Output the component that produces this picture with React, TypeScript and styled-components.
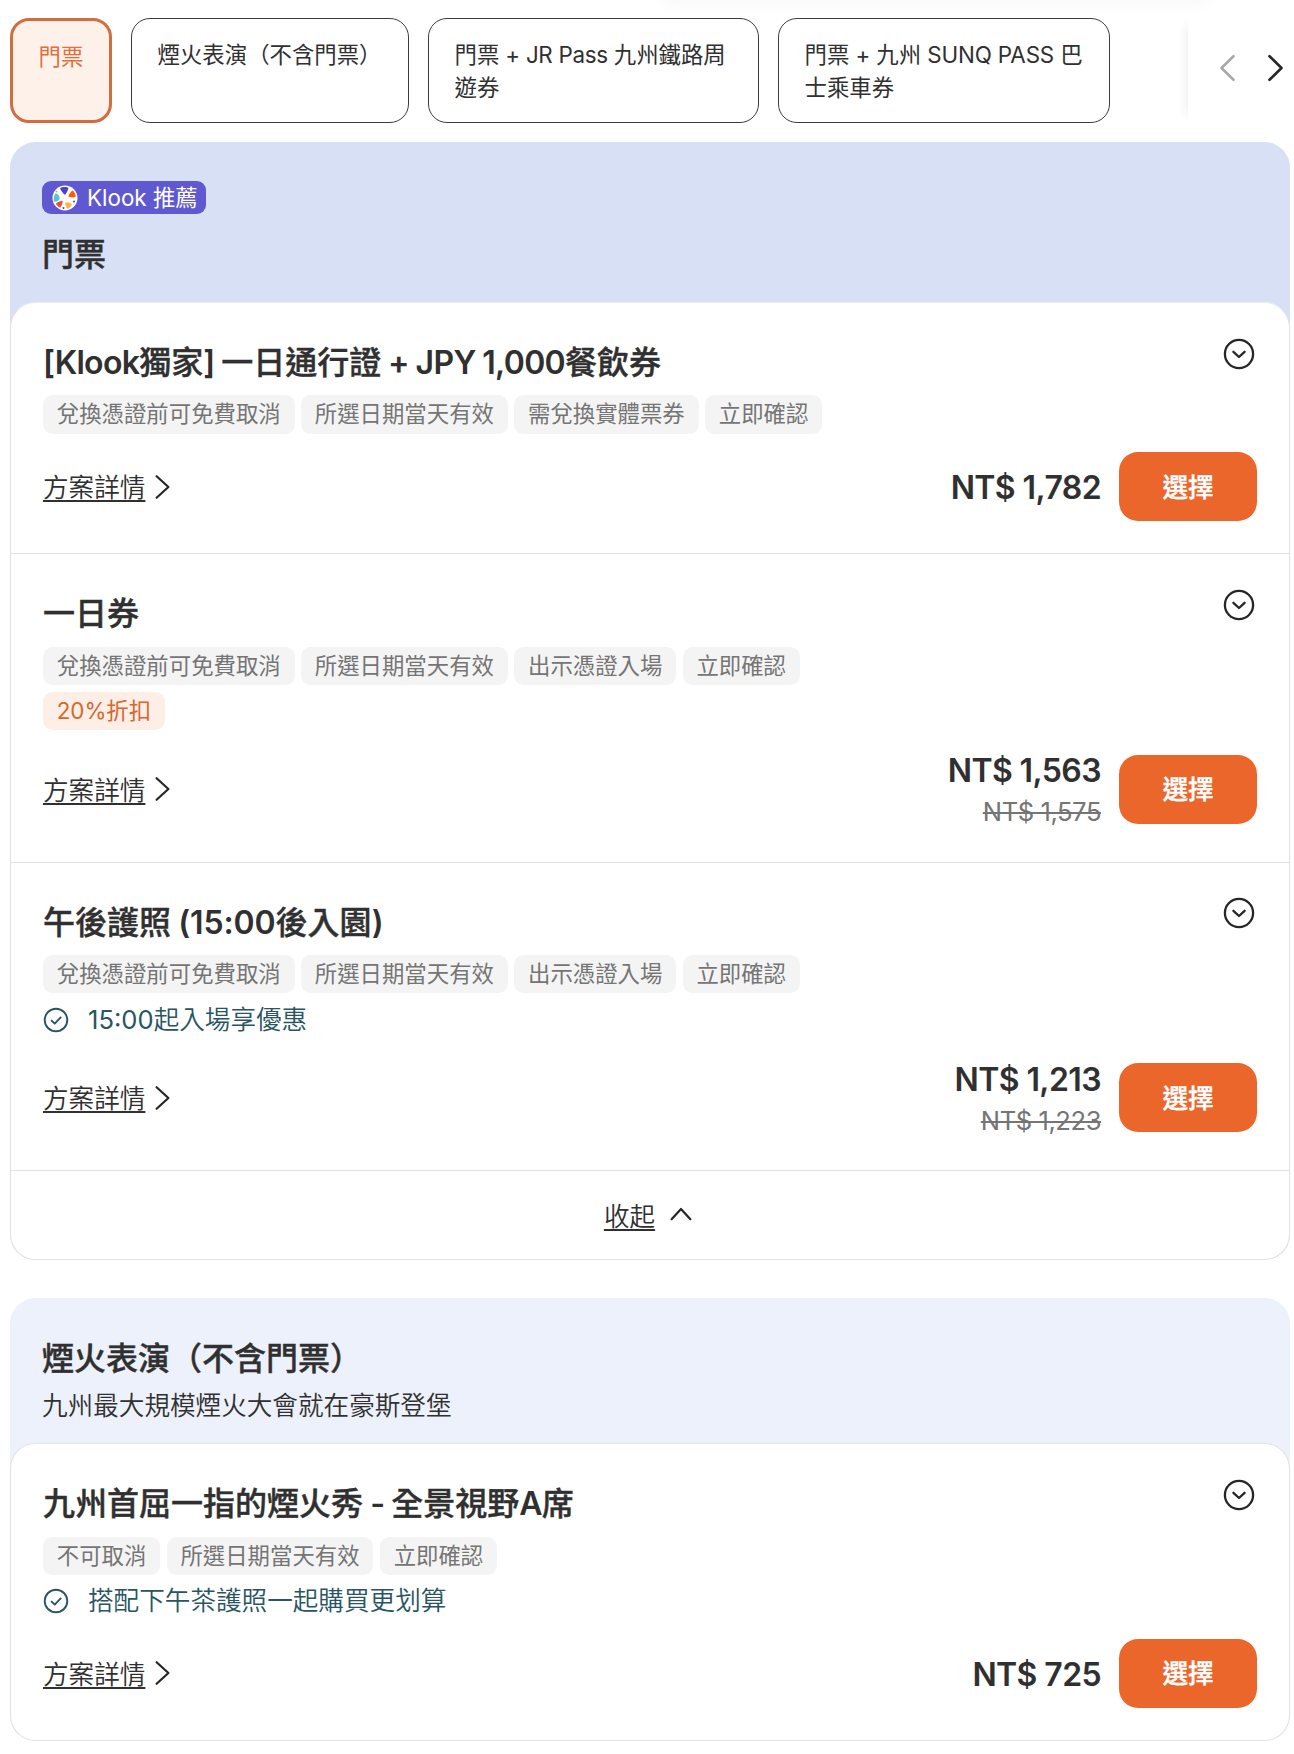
import React from 'react';
import styled, { createGlobalStyle, css } from 'styled-components';

const GlobalStyle = createGlobalStyle`
  *, *::before, *::after { box-sizing: border-box; }
  body {
    margin: 0;
    background: #fff;
    color: #303030;
    font-family: Inter, 'Noto Sans CJK TC', sans-serif;
    font-size: 25.6px;
  }
  button { font: inherit; border: 0; background: none; padding: 0; margin: 0; color: inherit; cursor: pointer; }
  svg { display: block; flex: none; }
`;

const Page = styled.main`
  position: relative;
  width: 1294px;
  height: 1754px;
  padding: 18px 4px 0 10px;
  overflow: hidden;
  background: #fff;
`;

const TopShade = styled.div`
  position: absolute;
  top: -20px;
  left: 660px;
  width: 550px;
  height: 18px;
  box-shadow: 0 4px 18px rgba(0, 0, 0, 0.035);
`;

const TabBar = styled.nav`
  display: flex;
  height: 105px;
`;

const TabList = styled.div`
  display: flex;
  flex: 1;
  gap: 19px;
`;

const Tab = styled.button<{ $width: number; $active?: boolean }>`
  display: flex;
  flex-direction: column;
  align-items: flex-start;
  justify-content: flex-start;
  flex: none;
  width: ${(p) => p.$width}px;
  height: 105px;
  padding: 19px 25.6px;
  border: 1px solid #3c3c3c;
  border-radius: 19px;
  background: #fff;
  color: #303030;
  font-size: 22.4px;
  text-align: left;
  ${(p) =>
    p.$active &&
    css`
      border: 3px solid #d26c41;
      background: #fdf1e9;
      color: #de6f3f;
    `}
`;

const TabLine = styled.span`
  display: block;
  height: 33px;
  line-height: 33px;
  white-space: pre;
`;

const TabNav = styled.div`
  display: flex;
  align-items: center;
  gap: 31px;
  width: 102px;
  padding: 0 2px 5px 30px;
  background: #fff;
  box-shadow: -10px 0 10px -8px rgba(0, 0, 0, 0.07);
`;

const Section = styled.section<{ $tint: string; $top: number }>`
  width: 1280px;
  margin-top: ${(p) => p.$top}px;
  border-radius: 25.6px;
  background: ${(p) => p.$tint};
`;

const SectionHead = styled.header<{ $height: number; $top: number }>`
  display: flex;
  flex-direction: column;
  align-items: flex-start;
  height: ${(p) => p.$height}px;
  padding: ${(p) => p.$top}px 32px 0;
`;

const Badge = styled.span`
  display: inline-flex;
  align-items: center;
  gap: 9px;
  width: 164px;
  height: 33px;
  margin-bottom: 17px;
  padding-left: 10px;
  border-radius: 9px;
  background: #5f58d0;
  color: #fff;
  font-size: 22.4px;
  line-height: 33px;
  white-space: nowrap;
`;

const SectionTitle = styled.h2`
  margin: 0;
  font-size: 32px;
  line-height: 48px;
  font-weight: 500;
  -webkit-text-stroke: 0.4px currentColor;
`;

const SectionNote = styled.p`
  margin: 4px 0 0;
  font-weight: 350;
  line-height: 38px;
`;

const Panel = styled.div<{ $edge: string }>`
  border: 1px solid #e2e2e2;
  border-top-color: ${(p) => p.$edge};
  border-radius: 25.6px;
  background: #fff;
`;

const Item = styled.article`
  padding: 32px 32px;
  & + & { border-top: 1px solid #e2e2e2; }
`;

const ItemHead = styled.div`
  display: flex;
  justify-content: space-between;
  height: 60.4px;
`;

const ItemTitle = styled.h3`
  margin: 0;
  padding-top: 3.8px;
  font-size: 32px;
  line-height: 48px;
  font-weight: 500;
  -webkit-text-stroke: 0.4px currentColor;
  white-space: nowrap;
`;

const LatinRun = styled.span<{ $tracking: number; $word: number; $weight?: number }>`
  letter-spacing: ${(p) => p.$tracking}px;
  word-spacing: ${(p) => p.$word}px;
  font-weight: ${(p) => p.$weight ?? 'inherit'};
  -webkit-text-stroke: 0;
`;

const ExpandButton = styled.button`
  align-self: flex-start;
  margin: 2.600px 2px 0 0;
`;

const Chips = styled.div`
  display: flex;
  gap: 6.5px;
  & + & { margin-top: 7.2px; }
`;

const Chip = styled.span<{ $sale?: boolean }>`
  height: 38.2px;
  padding: 0 13.8px;
  border-radius: 9.6px;
  background: ${(p) => (p.$sale ? '#fdefe5' : '#f4f4f4')};
  color: ${(p) => (p.$sale ? '#d9662f' : '#757575')};
  font-size: 22.4px;
  line-height: 38px;
  white-space: nowrap;
`;

const Perk = styled.div`
  display: flex;
  align-items: center;
  gap: 19px;
  height: 38.2px;
  margin-top: 7.2px;
  color: #295563;
  font-weight: 350;
  line-height: 38px;
`;

const ItemFoot = styled.div<{ $tall?: boolean }>`
  display: flex;
  align-items: center;
  height: ${(p) => (p.$tall ? 81 : 69)}px;
  margin-top: 18.6px;
`;

const TextLink = styled.button<{ $gap?: number }>`
  display: inline-flex;
  align-items: center;
  gap: ${(p) => p.$gap ?? 10}px;
  font-weight: 350;
  line-height: 38px;
`;

const LinkLabel = styled.span`
  padding-top: 3px;
  text-decoration: underline;
  text-decoration-thickness: 2px;
  text-underline-offset: 3px;
  text-decoration-skip-ink: none;
`;

const Prices = styled.div`
  display: flex;
  flex-direction: column;
  align-items: flex-end;
  margin-left: auto;
  padding-top: 3px;
`;

const Price = styled.strong`
  font-size: 32px;
  line-height: 42px;
  font-weight: 600;
  letter-spacing: -0.6px;
  white-space: nowrap;
`;

const OldPrice = styled.s`
  color: #757575;
  font-size: 25.6px;
  line-height: 39px;
  font-weight: 400;
  letter-spacing: -0.45px;
  text-decoration-thickness: 2px;
  white-space: nowrap;
`;

const SelectButton = styled.button`
  width: 138px;
  height: 69px;
  margin-left: 18px;
  padding-bottom: 3px;
  border-radius: 19.2px;
  background: #eb662b;
  color: #fff;
  font-weight: 500;
  -webkit-text-stroke: 0.4px currentColor;
`;

const PanelFoot = styled.footer`
  display: flex;
  align-items: center;
  justify-content: center;
  height: 89px;
  padding-right: 4px;
  border-top: 1px solid #e2e2e2;
`;

const Stroke = { fill: 'none', strokeLinecap: 'round', strokeLinejoin: 'round' } as const;

const SideArrow = ({ left }: { left?: boolean }) => (
  <svg width="18" height="30" viewBox="0 0 18 30" {...Stroke} stroke={left ? '#a8a8a8' : '#262626'} strokeWidth="2.6">
    <path d={left ? 'M15.5 3.2 3.5 15l12 11.8' : 'M2.5 3.2 14.5 15l-12 11.8'} />
  </svg>
);

const LinkArrow = () => (
  <svg width="16" height="26" viewBox="0 0 16 26" {...Stroke} stroke="#262626" strokeWidth="2.2">
    <path d="M1.6 2.200 13.400 13 1.600 23.800" />
  </svg>
);

const UpArrow = () => (
  <svg width="22" height="16" viewBox="0 0 22 16" {...Stroke} stroke="#262626" strokeWidth="2.2">
    <path d="M1.6 12.200 11 2l9.400 10.200" />
  </svg>
);

const ExpandIcon = () => (
  <svg width="32" height="32" viewBox="0 0 32 32" {...Stroke} stroke="#262626" strokeWidth="2.3">
    <circle cx="16" cy="16" r="14.1" />
    <path d="m10.400 13.800 5.600 5.200 5.600-5.200" />
  </svg>
);

const CheckIcon = () => (
  <svg width="26" height="26" viewBox="0 0 26 26" {...Stroke} stroke="#295563" strokeWidth="1.9">
    <circle cx="13" cy="13" r="11.3" />
    <path d="m8.600 13.600 3.100 3 6-6.200" />
  </svg>
);

const KlookMark = () => (
  <svg width="26" height="26" viewBox="0 0 26 26">
    <circle cx="13" cy="13" r="12.5" fill="#fff" />
    <path d="M8 3.200C9.400 2 14.600 1.600 16.400 2.800 16.200 5 14.600 8 13 10 11.600 8.600 8.600 5.400 8 3.200Z" fill="#4d40ca" />
    <path d="M16.200 11.300c1-2.600 2.600-4.800 4.300-5.900 2 1.500 3.200 4 3.200 6.400-2.400 1-5.600.8-7.500-.5Z" fill="#ff5b00" />
    <path d="M3.600 8.300c2.600.8 4.200 2.900 4 5.100-.2 1.800-1.800 3-5.400 3.400-.9-2.800-.3-6.300 1.400-8.500Z" fill="#4fc7d4" />
    <path d="M10.600 15.800c.2 2.200-.8 5-2.500 6.900-1.700-.7-3.300-2.200-4.200-3.900 1.700-1.700 4.300-2.800 6.700-3Z" fill="#f04b35" />
    <path d="M13.300 17.800c2.300-.7 4.700-.3 6.600 1.400-.5 2-2.300 3.800-4.300 4.500-1.600-1.500-2.400-3.700-2.300-5.900Z" fill="#f6b73c" />
    <circle cx="22" cy="16.600" r="1" fill="#4d40ca" />
    <circle cx="11.500" cy="23" r="1" fill="#4d40ca" />
    <circle cx="4.500" cy="6.600" r=".9" fill="#ff9d00" />
  </svg>
);

interface MixedProps {
  text: string;
  tracking?: number;
  word?: number;
  weight?: number;
}

// Sets the Latin runs of a Chinese line with their own tracking and weight.
const Mixed = ({ text, tracking = 0, word = 0, weight }: MixedProps) => (
  <>
    {text.split(/([\x20-\x7e]+)/).map((run, i) =>
      i % 2 ? (
        <LatinRun key={i} $tracking={tracking} $word={word} $weight={weight}>
          {run}
        </LatinRun>
      ) : (
        run
      ),
    )}
  </>
);

interface TabItem {
  lines: string[];
  width: number;
  tracking?: number;
}

const tabs: TabItem[] = [
  { lines: ['門票'], width: 102 },
  { lines: ['煙火表演（不含門票）'], width: 278 },
  { lines: ['門票 + JR Pass 九州鐵路周', '遊券'], width: 331, tracking: -0.3 },
  { lines: ['門票 + 九州 SUNQ PASS 巴', '士乘車券'], width: 332, tracking: -0.15 },
];

interface TicketProps {
  title: string;
  tracking?: number;
  word?: number;
  chips: string[];
  sale?: string;
  perk?: string;
  price: string;
  oldPrice?: string;
}

const Ticket = ({ title, tracking, word, chips, sale, perk, price, oldPrice }: TicketProps) => (
  <Item>
    <ItemHead>
      <ItemTitle>
        <Mixed text={title} tracking={tracking} word={word} weight={600} />
      </ItemTitle>
      <ExpandButton aria-label={title}>
        <ExpandIcon />
      </ExpandButton>
    </ItemHead>
    <Chips>
      {chips.map((c) => (
        <Chip key={c}>{c}</Chip>
      ))}
    </Chips>
    {sale && (
      <Chips>
        <Chip $sale>
          <Mixed text={sale} tracking={-0.1} />
        </Chip>
      </Chips>
    )}
    {perk && (
      <Perk>
        <CheckIcon />
        <span>
          <Mixed text={perk} weight={400} />
        </span>
      </Perk>
    )}
    <ItemFoot $tall={!!oldPrice}>
      <TextLink>
        <LinkLabel>方案詳情</LinkLabel>
        <LinkArrow />
      </TextLink>
      <Prices>
        <Price>{price}</Price>
        {oldPrice && <OldPrice>{oldPrice}</OldPrice>}
      </Prices>
      <SelectButton>選擇</SelectButton>
    </ItemFoot>
  </Item>
);

export default function App() {
  return (
    <Page lang="zh-Hant">
      <GlobalStyle />
      <TopShade />
      <TabBar>
        <TabList>
          {tabs.map((tab, i) => (
            <Tab key={tab.lines[0]} $width={tab.width} $active={i === 0}>
              {tab.lines.map((line) => (
                <TabLine key={line}>
                  <Mixed text={line} tracking={tab.tracking} />
                </TabLine>
              ))}
            </Tab>
          ))}
        </TabList>
        <TabNav>
          <SideArrow left />
          <SideArrow />
        </TabNav>
      </TabBar>

      <Section $tint="#d8e0f5" $top={19}>
        <SectionHead $height={160} $top={39}>
          <Badge>
            <KlookMark />
            Klook 推薦
          </Badge>
          <SectionTitle>門票</SectionTitle>
        </SectionHead>
        <Panel $edge="#eaeef8">
          <Ticket
            title="[Klook獨家] 一日通行證 + JPY 1,000餐飲券"
            tracking={-0.7}
            word={-0.6}
            chips={['兌換憑證前可免費取消', '所選日期當天有效', '需兌換實體票券', '立即確認']}
            price="NT$ 1,782"
          />
          <Ticket
            title="一日券"
            chips={['兌換憑證前可免費取消', '所選日期當天有效', '出示憑證入場', '立即確認']}
            sale="20%折扣"
            price="NT$ 1,563"
            oldPrice="NT$ 1,575"
          />
          <Ticket
            title="午後護照 (15:00後入園)"
            tracking={-0.1}
            word={-0.8}
            chips={['兌換憑證前可免費取消', '所選日期當天有效', '出示憑證入場', '立即確認']}
            perk="15:00起入場享優惠"
            price="NT$ 1,213"
            oldPrice="NT$ 1,223"
          />
          <PanelFoot>
            <TextLink $gap={15}>
              <LinkLabel>收起</LinkLabel>
              <UpArrow />
            </TextLink>
          </PanelFoot>
        </Panel>
      </Section>

      <Section $tint="#edf1fb" $top={38}>
        <SectionHead $height={145} $top={37}>
          <SectionTitle>煙火表演（不含門票）</SectionTitle>
          <SectionNote>九州最大規模煙火大會就在豪斯登堡</SectionNote>
        </SectionHead>
        <Panel $edge="#e2e4ea">
          <Ticket
            title="九州首屈一指的煙火秀 - 全景視野A席"
            tracking={-0.9}
            word={0}
            chips={['不可取消', '所選日期當天有效', '立即確認']}
            perk="搭配下午茶護照一起購買更划算"
            price="NT$ 725"
          />
        </Panel>
      </Section>
    </Page>
  );
}
